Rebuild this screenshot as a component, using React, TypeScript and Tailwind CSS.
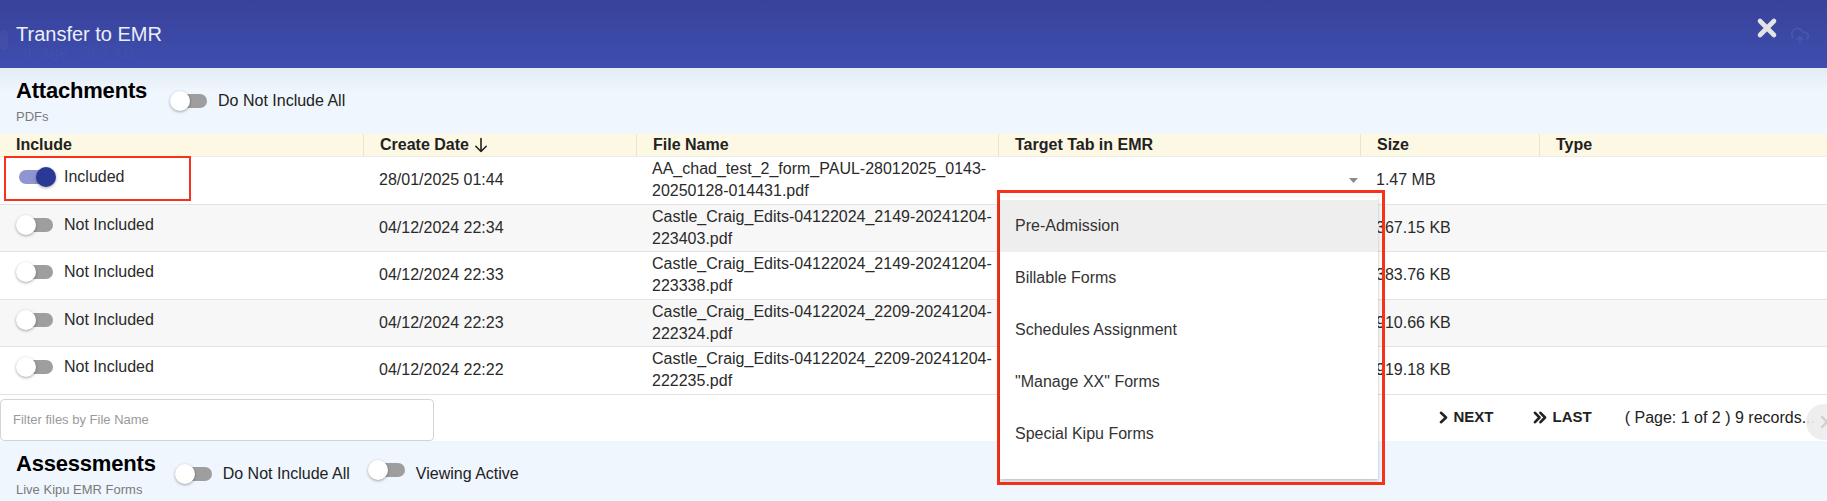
import React from "react";

type Row = { on: boolean; date: string; file: [string, string]; size: string };

const rows: Row[] = [
  { on: true, date: "28/01/2025 01:44", file: ["AA_chad_test_2_form_PAUL-28012025_0143-", "20250128-014431.pdf"], size: "1.47 MB" },
  { on: false, date: "04/12/2024 22:34", file: ["Castle_Craig_Edits-04122024_2149-20241204-", "223403.pdf"], size: "367.15 KB" },
  { on: false, date: "04/12/2024 22:33", file: ["Castle_Craig_Edits-04122024_2149-20241204-", "223338.pdf"], size: "383.76 KB" },
  { on: false, date: "04/12/2024 22:23", file: ["Castle_Craig_Edits-04122024_2209-20241204-", "222324.pdf"], size: "910.66 KB" },
  { on: false, date: "04/12/2024 22:22", file: ["Castle_Craig_Edits-04122024_2209-20241204-", "222235.pdf"], size: "919.18 KB" },
];

const menuItems = ["Pre-Admission", "Billable Forms", "Schedules Assignment", '"Manage XX" Forms', "Special Kipu Forms"];

function Switch({ on = false }: { on?: boolean }) {
  return (
    <span className="relative inline-block h-5 w-[40px] shrink-0">
      <span
        className={`absolute left-[3px] top-[3px] h-[14px] w-[34px] rounded-full ${on ? "bg-[#8e95d1]" : "bg-[#9e9e9e]"}`}
      />
      <span
        className={`absolute top-0 h-5 w-5 rounded-full shadow-[0_1px_3px_rgba(0,0,0,0.35)] ${on ? "left-[20px] bg-[#2a3896]" : "left-0 bg-white"}`}
      />
    </span>
  );
}

function SectionHead({
  title,
  sub,
  tight = false,
  children,
}: {
  title: string;
  sub: string;
  tight?: boolean;
  children: React.ReactNode;
}) {
  return (
    <div className="flex h-[66px] items-center px-4">
      <div className="flex flex-col">
        <div className="text-[22px] font-bold leading-[28px] tracking-[-0.2px] text-black">{title}</div>
        <div className="mt-[4px] text-[13px] leading-[16px] text-[#7a7a7a]">{sub}</div>
      </div>
      <div className={`flex items-center ${tight ? "ml-[19px]" : "ml-[23px]"}`}>{children}</div>
    </div>
  );
}

export default function App() {
  return (
    <div className="relative h-[501px] w-full overflow-hidden bg-white font-['Liberation_Sans',Arial,sans-serif] text-[#2a2a2a]">
      {/* title bar */}
      <div className="relative flex h-[68px] items-center bg-gradient-to-b from-[#38429a] to-[#3e4eaf] px-4">
        <span className="absolute left-0 top-[30px] h-[20px] w-[8px] rounded-sm bg-white/[0.03]" />
        <span className="absolute left-[24px] top-[41px] text-[16px] text-white/[0.03]">image · 368 KB</span>
        <h1 className="relative text-[20px] leading-6 text-[#eceef8]">Transfer to EMR</h1>
        <svg className="ml-auto mr-[12px] mt-[17px] self-start" width="22" height="22" viewBox="0 0 22 22">
          <path d="M4 4 18 18M18 4 4 18" stroke="#e4e4e4" strokeWidth="4.6" strokeLinecap="round" />
        </svg>
        <svg className="mr-[1px] mt-[26px] self-start opacity-[0.07]" width="20" height="20" viewBox="0 0 24 24" fill="none" stroke="#fff" strokeWidth="2">
          <path d="M12 13v8M4 14.9A7 7 0 1 1 15.7 8h1.8a4.5 4.5 0 0 1 2.5 8.2M8 17l4-4 4 4" />
        </svg>
      </div>

      {/* attachments */}
      <div className="bg-[linear-gradient(to_bottom,#e3ebf4,#eff6fd_35%)]">
        <SectionHead title="Attachments" sub="PDFs">
          <Switch />
          <span className="ml-[8px] text-[16px] text-[#222]">Do Not Include All</span>
        </SectionHead>
      </div>

      {/* table header */}
      <div className="grid h-[23px] grid-cols-[363px_273px_362px_362px_179px_1fr] border-b border-[#ececec] bg-[#fdf8e4] text-[16px] font-bold leading-[22px] text-[#222]">
        <div className="pl-4">Include</div>
        <div className="flex items-center gap-[5px] border-l border-[#ebe4cc] pl-4">
          Create Date
          <svg width="14" height="16" viewBox="0 0 14 16" fill="none" stroke="#222" strokeWidth="1.6" strokeLinecap="round" strokeLinejoin="round">
            <path d="M7 1.5v13M1.8 9.3 7 14.5l5.2-5.2" />
          </svg>
        </div>
        <div className="border-l border-[#ebe4cc] pl-4">File Name</div>
        <div className="border-l border-[#ebe4cc] pl-4">Target Tab in EMR</div>
        <div className="border-l border-[#ebe4cc] pl-4">Size</div>
        <div className="border-l border-[#ebe4cc] pl-4">Type</div>
      </div>

      {/* rows */}
      {rows.map((r, i) => (
        <div
          key={i}
          className={`grid h-[47.5px] grid-cols-[363px_273px_362px_362px_179px_1fr] border-b border-[#e3e3e3] text-[16px] ${i % 2 ? "bg-[#f7f7f7]" : "bg-white"}`}
        >
          <div className="flex items-start pl-4 pt-[9px]">
            <div className="flex h-[22px] items-center">
              <Switch on={r.on} />
              <span className="ml-[8px] leading-[22px]">{r.on ? "Included" : "Not Included"}</span>
            </div>
          </div>
          <div className="flex items-center pl-4">{r.date}</div>
          <div className="whitespace-nowrap pl-4 pt-[1px] leading-[22px]">
            <div>{r.file[0]}</div>
            <div>{r.file[1]}</div>
          </div>
          <div className="flex items-center justify-end pr-[2px]">
            {i === 0 && (
              <svg width="9" height="5" viewBox="0 0 9 5">
                <path d="M0 0h9L4.5 5z" fill="#8a8a8a" />
              </svg>
            )}
          </div>
          <div className="flex items-center pl-4">{r.size}</div>
          <div />
        </div>
      ))}

      {/* filter + pager */}
      <div className="relative flex h-[46px] items-end bg-white">
        <div className="flex h-[42px] w-[434px] items-center rounded-[4px] border border-[#d4d4d4] bg-white pl-3 text-[13px] text-[#9a9a9a]">
          Filter files by File Name
        </div>
        <div className="ml-auto flex h-full items-center pr-[12px] text-[#222]">
          <span className="flex items-center gap-[6px] text-[15px] font-bold">
            <svg width="9" height="13" viewBox="0 0 9 13" fill="none" stroke="#222" strokeWidth="2.6" strokeLinecap="round" strokeLinejoin="round">
              <path d="M2 1.8 7 6.5 2 11.2" />
            </svg>
            NEXT
          </span>
          <span className="ml-[39px] flex items-center gap-[6px] text-[15px] font-bold">
            <svg width="14" height="13" viewBox="0 0 14 13" fill="none" stroke="#222" strokeWidth="2.6" strokeLinecap="round" strokeLinejoin="round">
              <path d="M2 1.8 6.5 6.5 2 11.2M7.5 1.8 12 6.5 7.5 11.2" />
            </svg>
            LAST
          </span>
          <span className="ml-[33px] text-[16px]">( Page: 1 of 2 ) 9 records...</span>
        </div>
        <div className="absolute left-[1806px] top-[9px] flex h-9 w-9 items-center justify-center rounded-full bg-[#ececec]/90">
          <svg width="10" height="14" viewBox="0 0 10 14" fill="none" stroke="#cfcfcf" strokeWidth="2.4" strokeLinecap="round">
            <path d="M3 2l5 5-5 5" />
          </svg>
        </div>
      </div>

      {/* assessments */}
      <div className="bg-[#eff6fd]">
        <SectionHead title="Assessments" sub="Live Kipu EMR Forms" tight>
          <Switch />
          <span className="ml-[8px] text-[16px] text-[#222]">Do Not Include All</span>
          <span className="ml-[18px]">
            <Switch />
          </span>
          <span className="ml-[8px] text-[16px] text-[#222]">Viewing Active</span>
        </SectionHead>
      </div>

      {/* highlight around first include toggle */}
      <div className="absolute left-[4px] top-[156px] h-[45px] w-[187px] border-2 border-[#f8321a]" />

      {/* open target tab menu */}
      <div className="absolute left-[997px] top-[190px] h-[295px] w-[388px] border-[3px] border-[#f8321a]">
        <div className="mt-[4px] h-[282px] w-[378px] bg-white pt-[3px] shadow-[0_2px_4px_rgba(0,0,0,0.2),0_0_1px_rgba(0,0,0,0.15)]">
          {menuItems.map((m, i) => (
            <div
              key={m}
              className={`flex h-[52px] items-center pl-[15px] text-[16px] text-[#333] ${i === 0 ? "bg-[#eeeeee]" : ""}`}
            >
              {m}
            </div>
          ))}
        </div>
      </div>
    </div>
  );
}
